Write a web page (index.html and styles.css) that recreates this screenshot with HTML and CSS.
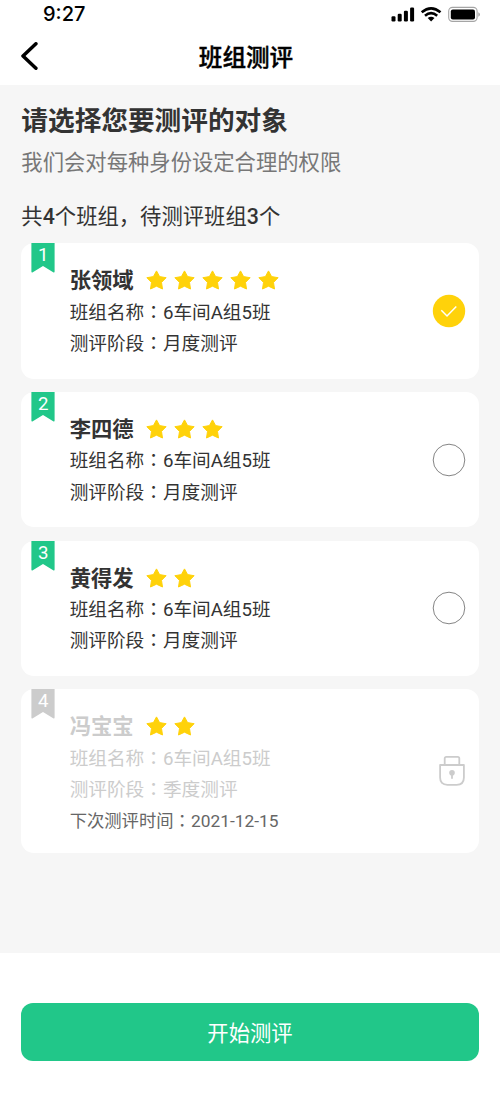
FILE: index.html
```html
<!DOCTYPE html>
<html lang="zh-CN">
<head>
<meta charset="utf-8">
<title>班组测评</title>
<link rel="stylesheet" href="styles.css">
</head>
<body>
<svg class="sprite" aria-hidden="true">
  <symbol id="star" viewBox="0 0 21 20"><path d="M10.5.9 13.6 6.6 20.1 7.7 15.5 12.4 16.5 19 10.5 16.2 4.5 19 5.5 12.4.9 7.7 7.4 6.6Z" fill="#ffd20a" stroke="#ffd20a" stroke-width="1" stroke-linejoin="round"/></symbol>
  <symbol id="ribbon" viewBox="0 0 24 30"><path d="M.4 0H23.6V28.4Q23.6 30 22.2 29.2L12 22.9 1.8 29.2Q.4 30 .4 28.4Z" fill="currentColor"/></symbol>
</svg>
<div class="status">
  <span class="time">9:27</span>
  <svg class="status-icons" viewBox="0 0 90 18" width="90" height="18">
    <g fill="#000">
      <rect x="1.5" y="10.3" width="4" height="5.2" rx="1.2"/>
      <rect x="7.7" y="7.8" width="4" height="7.7" rx="1.2"/>
      <rect x="13.9" y="4.8" width="4" height="10.7" rx="1.2"/>
      <rect x="20.1" y="1.5" width="4" height="14" rx="1.2"/>
    </g>
    <g fill="none" stroke="#000" stroke-width="2.6">
      <path d="M31.7 6.2Q41.1-1.6 50.5 6.2"/>
      <path d="M35 9.8Q41.1 4.6 47.2 9.8"/>
    </g>
    <path d="M37.7 12.1Q41.1 9.4 44.5 12.1L41.1 15.4Z" fill="#000"/>
    <rect x="58.7" y="1.4" width="28.4" height="14" rx="3.8" fill="none" stroke="#a5a5a5" stroke-width="1.1"/>
    <rect x="60.8" y="3.4" width="24.2" height="10" rx="2" fill="#000"/>
    <path d="M88.3 6.3Q90 7 90 8.5T88.3 10.8Z" fill="#a5a5a5"/>
  </svg>
</div>
<header class="nav">
  <svg class="back" viewBox="0 0 18 28" width="18" height="28"><path d="M15.9 1.8 3 14 15.9 26.2" fill="none" stroke="#000" stroke-width="3.5" stroke-linecap="round" stroke-linejoin="round"/></svg>
  <h1>班组测评</h1>
</header>
<main class="content">
  <h2>请选择您要测评的对象</h2>
  <p class="hint">我们会对每种身份设定合理的权限</p>
  <p class="summary">共<b>4</b>个班组，待测评班组<b>3</b>个</p>
  <div class="list">
    <section class="card">
      <div class="badge"><svg><use href="#ribbon"/></svg><span>1</span></div>
      <div class="info">
        <div class="name">张领域<span class="stars"><svg><use href="#star"/></svg><svg><use href="#star"/></svg><svg><use href="#star"/></svg><svg><use href="#star"/></svg><svg><use href="#star"/></svg></span></div>
        <p>班组名称<i lang="zh-TW">：</i>6车间A组5班</p>
        <p>测评阶段<i lang="zh-TW">：</i>月度测评</p>
      </div>
      <svg class="radio" viewBox="0 0 34 34"><circle cx="17" cy="17" r="16.2" fill="#ffd20a"/><path d="M9.3 16.3 15 22 24.3 12.4" fill="none" stroke="#fff" stroke-width="1.5"/></svg>
    </section>
    <section class="card">
      <div class="badge"><svg><use href="#ribbon"/></svg><span>2</span></div>
      <div class="info">
        <div class="name">李四德<span class="stars"><svg><use href="#star"/></svg><svg><use href="#star"/></svg><svg><use href="#star"/></svg></span></div>
        <p>班组名称<i lang="zh-TW">：</i>6车间A组5班</p>
        <p>测评阶段<i lang="zh-TW">：</i>月度测评</p>
      </div>
      <svg class="radio" viewBox="0 0 34 34"><circle cx="17" cy="17" r="15.8" fill="#fff" stroke="#777" stroke-width=".9"/></svg>
    </section>
    <section class="card">
      <div class="badge"><svg><use href="#ribbon"/></svg><span>3</span></div>
      <div class="info">
        <div class="name">黄得发<span class="stars"><svg><use href="#star"/></svg><svg><use href="#star"/></svg></span></div>
        <p>班组名称<i lang="zh-TW">：</i>6车间A组5班</p>
        <p>测评阶段<i lang="zh-TW">：</i>月度测评</p>
      </div>
      <svg class="radio" viewBox="0 0 34 34"><circle cx="17" cy="17" r="15.8" fill="#fff" stroke="#777" stroke-width=".9"/></svg>
    </section>
    <section class="card locked">
      <div class="badge"><svg><use href="#ribbon"/></svg><span>4</span></div>
      <div class="info">
        <div class="name">冯宝宝<span class="stars"><svg><use href="#star"/></svg><svg><use href="#star"/></svg></span></div>
        <p>班组名称<i lang="zh-TW">：</i>6车间A组5班</p>
        <p>测评阶段<i lang="zh-TW">：</i>季度测评</p>
        <p class="next">下次测评时间<i lang="zh-TW">：</i>2021-12-15</p>
      </div>
      <svg class="lock" viewBox="0 0 28 32"><g fill="none" stroke="#ccc" stroke-width="1.8" stroke-linejoin="round"><path d="M2.1 10H25.9V22.5Q25.9 29.8 18.6 29.8H9.4Q2.1 29.8 2.1 22.5Z"/><path d="M6.7 10V3.5Q6.7 1.9 8.3 1.9H19.7Q21.3 1.9 21.3 3.5V10"/><path d="M14 18V23.8"/></g><circle cx="14" cy="17.7" r="2.8" fill="#ccc"/></svg>
    </section>
  </div>
</main>
<footer class="footer"><button class="start">开始测评</button></footer>
</body>
</html>
```
FILE: styles.css
```css
* { box-sizing: border-box; }
body {
  margin: 0;
  width: 500px;
  height: 1111px;
  display: flex;
  flex-direction: column;
  overflow: hidden;
  background: #fff;
  color: #333;
  font-family: Roboto, "Noto Sans CJK SC", sans-serif;
}
h1, h2, p { margin: 0; }
.sprite { display: none; }
.status {
  height: 29px;
  padding: 0 20px 0 43px;
  display: flex;
  justify-content: space-between;
}
.time {
  font: 500 20px/29px Inter, sans-serif;
  color: #000;
}
.status-icons { margin-top: 6px; }
.nav {
  height: 56px;
  padding: 0 20px;
  display: grid;
  grid-template-columns: 18px 1fr 18px;
  align-items: center;
}
.back { margin-top: -2px; }
.nav h1 {
  margin-left: -8px;
  margin-top: -3px;
  text-align: center;
  font: 500 23.6px/54px "Noto Sans CJK SC", sans-serif;
  -webkit-text-stroke: .4px #000;
  color: #000;
}
.content {
  height: 868px;
  padding: 16px 21.33px 0;
  background: #f6f6f6;
}
.content h2 {
  font-size: 26.67px;
  line-height: 40px;
  font-weight: 700;
}
.hint {
  margin-top: 6px;
  font-size: 21.33px;
  line-height: 32px;
  color: #777;
}
.summary {
  margin-top: 22px;
  font-size: 21.33px;
  line-height: 32px;
}
.summary b { font-weight: 500; }
.list {
  margin-top: 10.33px;
  display: flex;
  flex-direction: column;
  gap: 13.33px;
}
.card {
  height: 135.33px;
  padding-left: 10px;
  padding-right: 13px;
  display: flex;
  border-radius: 13px;
  background: #fff;
}
.badge {
  width: 24px;
  height: 30px;
  display: grid;
  color: #21c789;
}
.badge svg, .badge span { grid-area: 1 / 1; }
.badge svg { width: 24px; height: 30px; }
.badge span {
  text-align: center;
  font-size: 18.67px;
  line-height: 24px;
  color: #fff;
}
.info {
  flex: 1;
  margin-left: 14.3px;
  padding-top: 20.5px;
  font-size: 18.67px;
  line-height: 31.2px;
}
.info p { height: 31.2px; }
.info i {
  font-family: "Noto Sans CJK TC", sans-serif;
  font-style: normal;
  line-height: 1;
}
.name {
  height: 34px;
  display: flex;
  align-items: center;
  font-size: 21.33px;
  font-weight: 700;
}
.stars {
  margin: -1px 0 0 12.4px;
  display: flex;
  gap: 7px;
}
.stars svg { width: 21px; height: 20px; }
.radio {
  width: 34px;
  height: 34px;
  align-self: center;
}
.locked { height: 163.33px; color: #ccc; }
.locked .badge { color: #ccc; }
.locked .next {
  font-size: 17.33px;
  color: #666;
}
.lock {
  width: 28px;
  height: 32px;
  align-self: center;
}
.footer {
  height: 158px;
  padding: 49.5px 21.33px 0;
}
.start {
  width: 100%;
  height: 58.67px;
  padding: 0 0 1px;
  display: block;
  border: 0;
  border-radius: 12px;
  background: #21c789;
  color: #fff;
  font: 400 21.33px/57px "Noto Sans CJK SC", sans-serif;
}
```
